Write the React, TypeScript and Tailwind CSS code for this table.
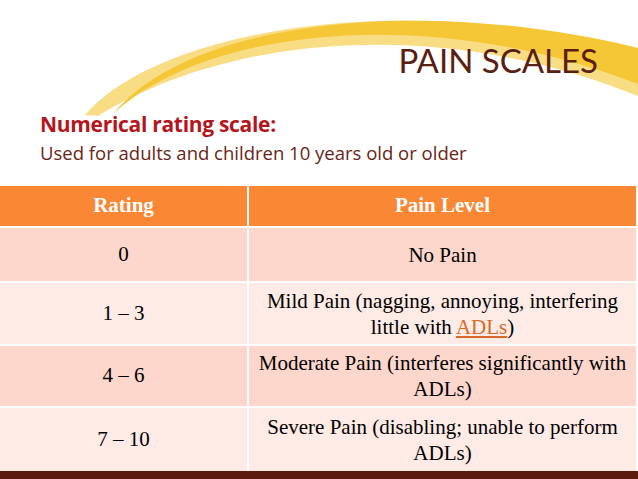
import React from "react";

type Row = {
  rating: string;
  level: React.ReactNode;
  h: string;
  bg: string;
};

const rows: Row[] = [
  { rating: "0", level: "No Pain", h: "h-[53px]", bg: "bg-[#fdd6cc]" },
  {
    rating: "1 – 3",
    level: (
      <>
        Mild Pain (nagging, annoying, interfering
        <br />
        little with{" "}
        <span className="text-[#d9682a] underline underline-offset-2">ADLs</span>)
      </>
    ),
    h: "h-[61px]",
    bg: "bg-[#feebe5]",
  },
  {
    rating: "4 – 6",
    level: (
      <>
        Moderate Pain (interferes significantly with
        <br />
        ADLs)
      </>
    ),
    h: "h-[60px]",
    bg: "bg-[#fdd6cc]",
  },
  {
    rating: "7 – 10",
    level: (
      <>
        Severe Pain (disabling; unable to perform
        <br />
        ADLs)
      </>
    ),
    h: "h-[63px]",
    bg: "bg-[#feebe5]",
  },
];

function Swoosh() {
  return (
    <svg
      className="absolute left-0 top-0"
      width="638"
      height="130"
      viewBox="0 0 638 130"
    >
      {/* pale strand */}
      <path
        d="M 85 115 C 160 28, 410 -12, 638 52 L 638 96 C 430 12, 220 40, 98 116 Z"
        fill="#f9dd85"
      />
      {/* main strand */}
      <path
        d="M 113 114 C 190 20, 420 -5, 638 48 L 638 84 C 420 0, 200 32, 113 114 Z"
        fill="#f5c636"
      />
    </svg>
  );
}

export default function App() {
  return (
    <div className="relative w-[638px] h-[479px] bg-white overflow-hidden">
      <Swoosh />

      <div className="relative flex flex-col">
        {/* ===== TITLE ===== */}
        <h1 className="pt-[40px] pr-[40px] text-right text-[33px] leading-[40px] text-[#5b1e12] font-['Lato',sans-serif]">
          PAIN SCALES
        </h1>

        <div className="pl-[40px] font-['Open_Sans',sans-serif]">
          <p className="mt-[31px] text-[21px] leading-[26px] font-bold tracking-[-0.3px] text-[#b5151b]">
            Numerical rating scale:
          </p>
          <p className="mt-[4px] text-[18.5px] leading-[23px] text-[#6a2416]">
            Used for adults and children 10 years old or older
          </p>
        </div>

        {/* ===== TABLE ===== */}
        <div className="mt-[22px] w-[636px] flex flex-col gap-[2px] bg-white font-['Liberation_Serif',serif] text-[21px] text-black">
          <div className="grid grid-cols-[247px_1fr] gap-[2px] h-[40px] font-bold text-white">
            <div className="bg-[#f98734] flex items-center justify-center">Rating</div>
            <div className="bg-[#f98734] flex items-center justify-center">Pain Level</div>
          </div>
          {rows.map((r) => (
            <div key={r.rating} className={`grid grid-cols-[247px_1fr] gap-[2px] ${r.h}`}>
              <div className={`${r.bg} flex items-center justify-center`}>{r.rating}</div>
              <div className={`${r.bg} flex items-center justify-center text-center leading-[26px]`}>
                <span>{r.level}</span>
              </div>
            </div>
          ))}
        </div>

        {/* bottom bar */}
        <div className="h-[8px] bg-[#5c1a0e]" />
      </div>
    </div>
  );
}
